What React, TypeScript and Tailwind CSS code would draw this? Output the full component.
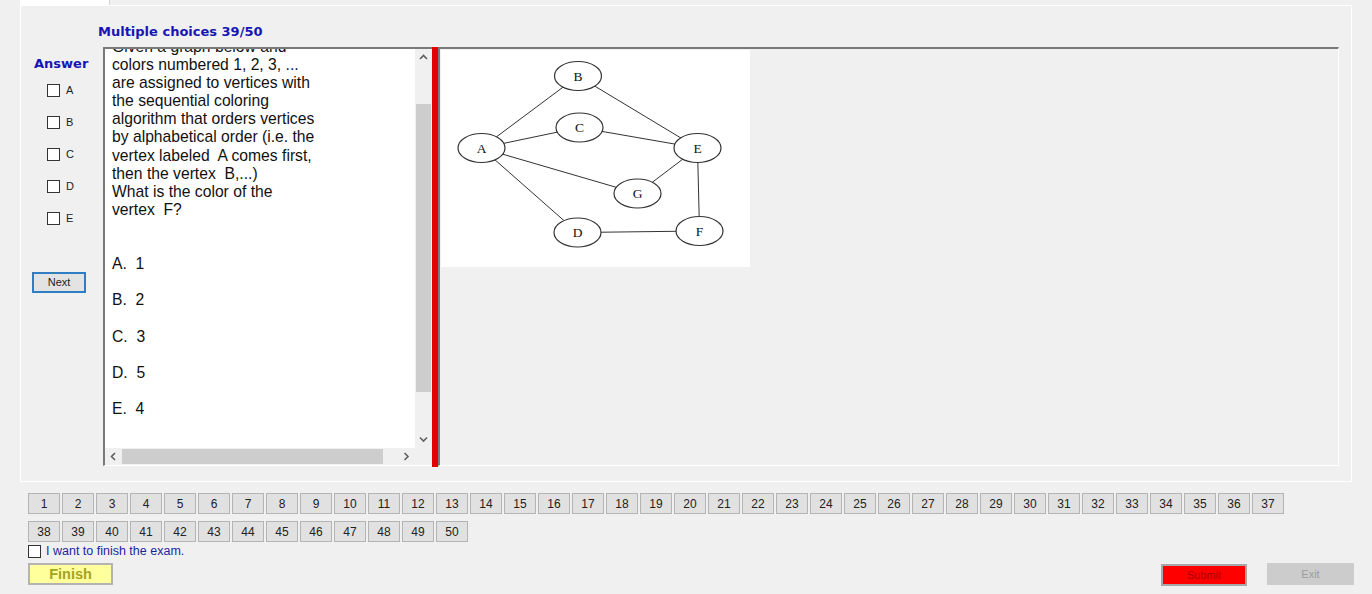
import React from "react";

const questionLines = [
  "Given a graph below and",
  "colors numbered 1, 2, 3, ...",
  "are assigned to vertices with",
  "the sequential coloring",
  "algorithm that orders vertices",
  "by alphabetical order (i.e. the",
  "vertex labeled  A comes first,",
  "then the vertex  B,...)",
  "What is the color of the",
  "vertex  F?",
  "",
  "",
  "A.  1",
  "",
  "B.  2",
  "",
  "C.  3",
  "",
  "D.  5",
  "",
  "E.  4",
];

const nodes: { id: string; x: number; y: number }[] = [
  { id: "A", x: 40.5, y: 98 },
  { id: "B", x: 137, y: 26 },
  { id: "C", x: 138.5, y: 77.5 },
  { id: "E", x: 256.5, y: 98 },
  { id: "G", x: 196.5, y: 143.5 },
  { id: "D", x: 136.5, y: 182.5 },
  { id: "F", x: 258.5, y: 181 },
];

const edges = [
  ["A", "B"],
  ["A", "C"],
  ["A", "G"],
  ["A", "D"],
  ["B", "E"],
  ["C", "E"],
  ["G", "E"],
  ["E", "F"],
  ["D", "F"],
];

function Chevron({ dir }: { dir: "up" | "down" | "left" | "right" }) {
  const d = {
    up: "M1 5 L4.5 1.5 L8 5",
    down: "M1 1.5 L4.5 5 L8 1.5",
    left: "M5 1 L1.5 4.5 L5 8",
    right: "M1.5 1 L5 4.5 L1.5 8",
  }[dir];
  const vertical = dir === "up" || dir === "down";
  return (
    <svg width={vertical ? 9 : 7} height={vertical ? 7 : 9} viewBox={vertical ? "0 0 9 7" : "0 0 7 9"}>
      <path d={d} fill="none" stroke="#606060" strokeWidth="1.6" />
    </svg>
  );
}

function Graph() {
  const pos = (id: string) => nodes.find((n) => n.id === id)!;
  return (
    <svg width="309" height="217" viewBox="0 0 309 217">
      {edges.map(([a, b]) => {
        const p = pos(a);
        const q = pos(b);
        return <line key={a + b} x1={p.x} y1={p.y} x2={q.x} y2={q.y} stroke="#333" strokeWidth="1" />;
      })}
      {nodes.map((n) => (
        <g key={n.id}>
          <ellipse cx={n.x} cy={n.y} rx="23.5" ry="14.5" fill="#fff" stroke="#333" strokeWidth="1.2" />
          <text
            x={n.x}
            y={n.y + 4.7}
            textAnchor="middle"
            fontSize="13.5"
            fontFamily="'Liberation Serif', 'Times New Roman', serif"
            fill="#111"
          >
            {n.id}
          </text>
        </g>
      ))}
    </svg>
  );
}

export default function App() {
  const numbers = Array.from({ length: 50 }, (_, i) => i + 1);
  return (
    <div className="h-[594px] w-full bg-[#f0f0f0] font-['Liberation_Sans',Arial,sans-serif] text-black overflow-hidden">
      <div className="h-[5px]">
        <div className="ml-[20px] w-[90px] h-[5px] bg-white border-r border-[#d4d4d4]"></div>
      </div>

      <div className="ml-[20px] w-[1332px] h-[477px] border border-white">
        <div className="pl-[77px] pt-[18px] h-[34px] font-['DejaVu_Sans',sans-serif] font-bold text-[13px] leading-[16px] text-[#1616b4]">
          Multiple choices 39/50
        </div>

        <div className="flex mt-[7px]">
          {/* answer column */}
          <div className="w-[82px] flex flex-col">
            <div className="pl-[13px] mt-[9px] font-['DejaVu_Sans',sans-serif] font-bold text-[13px] leading-[16px] text-[#1616b4]">
              Answer
            </div>
            <div className="flex flex-col gap-[19px] mt-[12px] pl-[26px]">
              {["A", "B", "C", "D", "E"].map((l) => (
                <div key={l} className="flex items-center h-[13px]">
                  <div className="w-[13px] h-[13px] border border-[#333] bg-white"></div>
                  <span className="ml-[6px] text-[11px] leading-[13px] text-[#222]">{l}</span>
                </div>
              ))}
            </div>
            <button className="ml-[11px] mt-[47px] w-[54px] h-[21px] border-2 border-[#2f7dc4] bg-[#e3e3e3] text-[11px] leading-[15px] text-[#222]">
              Next
            </button>
          </div>

          {/* question text box */}
          <div className="w-[329px] h-[419px] border-t-2 border-l-2 border-b border-t-[#7a7a7a] border-l-[#7a7a7a] border-b-white flex flex-col">
            <div className="flex h-[399px]">
              <div className="w-[310px] bg-white overflow-hidden">
                <div className="mt-[-11px] pl-[7px] text-[15.7px] leading-[18.1px] text-[#111] whitespace-pre">
                  {questionLines.map((t, i) => (
                    <div key={i}>{t === "" ? "\u00a0" : t}</div>
                  ))}
                </div>
              </div>
              <div className="w-[17px] bg-[#f0f0f0] flex flex-col">
                <div className="h-[17px] flex items-center justify-center">
                  <Chevron dir="up" />
                </div>
                <div className="flex-1 px-[1px]">
                  <div className="mt-[38px] h-[288px] bg-[#cdcdcd]"></div>
                </div>
                <div className="h-[17px] flex items-center justify-center">
                  <Chevron dir="down" />
                </div>
              </div>
            </div>
            <div className="flex h-[17px]">
              <div className="w-[310px] bg-[#f0f0f0] flex items-center">
                <div className="w-[17px] flex justify-center">
                  <Chevron dir="left" />
                </div>
                <div className="w-[261px] h-[15px] bg-[#cdcdcd]"></div>
                <div className="w-[15px]"></div>
                <div className="w-[17px] flex justify-center">
                  <Chevron dir="right" />
                </div>
              </div>
              <div className="w-[17px] bg-[#f0f0f0]"></div>
            </div>
          </div>

          {/* red divider */}
          <div className="w-[6px] h-[420px] bg-[#e40000]"></div>

          {/* picture box */}
          <div className="w-[901px] h-[419px] border-t-2 border-l-2 border-r border-b border-t-[#7a7a7a] border-l-[#7a7a7a] border-r-white border-b-white">
            <div className="m-[1px] w-[309px] h-[217px] bg-white">
              <Graph />
            </div>
          </div>
        </div>
      </div>

      {/* question navigation */}
      <div className="mt-[11px] pl-[28px] flex flex-col gap-[7px]">
        {[numbers.slice(0, 37), numbers.slice(37)].map((row, r) => (
          <div key={r} className="flex gap-[2px]">
            {row.map((n) => (
              <div
                key={n}
                className="w-[32px] h-[21px] border border-[#b4b4b4] bg-[#e1e1e1] flex items-center justify-center text-[12px] text-[#222]"
              >
                {n}
              </div>
            ))}
          </div>
        ))}
      </div>

      <div className="mt-[1px] pl-[28px] flex items-center h-[16px]">
        <div className="w-[13px] h-[13px] border border-[#333] bg-white"></div>
        <span className="ml-[5px] text-[12.5px] leading-[16px] text-[#1f1fa6]">I want to finish the exam.</span>
      </div>

      <div className="mt-[4px] pl-[28px] pr-[14px] flex items-start w-[1368px]">
        <button className="w-[85px] h-[22px] border-2 border-[#b4b4b4] bg-[#ffff9c] font-bold text-[14.5px] leading-[16px] text-[#a3a323]">
          Finish
        </button>
        <div className="flex-1"></div>
        <button className="mt-[1px] w-[86px] h-[22px] border-2 border-[#a8a8a8] bg-[#ff0000] text-[11px] leading-[16px] text-[#a80000]">
          Submit
        </button>
        <button className="ml-[20px] w-[87px] h-[22px] bg-[#cccccc] text-[11px] leading-[22px] text-[#9c9c9c]">
          Exit
        </button>
      </div>
    </div>
  );
}
